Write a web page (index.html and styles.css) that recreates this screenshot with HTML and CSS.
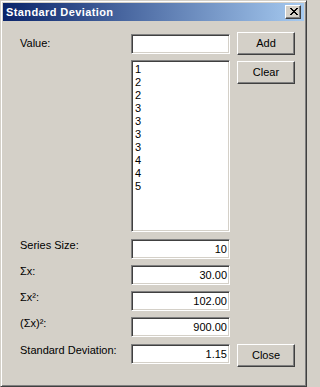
FILE: index.html
```html
<!DOCTYPE html>
<html>
<head>
<meta charset="utf-8">
<link rel="stylesheet" href="styles.css">
</head>
<body>
<div class="window">
  <div class="titlebar">
    <span class="title">Standard Deviation</span>
    <span class="caption-btn">
      <svg width="8" height="7" viewBox="0 0 8 7" shape-rendering="crispEdges"><path fill="#000" d="M0 0h2v1H0z M6 0h2v1H6z M1 1h2v1H1z M5 1h2v1H5z M2 2h4v1H2z M3 3h2v1H3z M2 4h4v1H2z M1 5h2v1H1z M5 5h2v1H5z M0 6h2v1H0z M6 6h2v1H6z"/></svg>
    </span>
  </div>
  <div class="client">
    <div class="row row-value">
      <span class="label label-value">Value:</span>
      <div class="field field-input"></div>
      <button class="btn">Add</button>
    </div>
    <div class="row row-list">
      <span class="label"></span>
      <div class="listbox">
        <div>1</div><div>2</div><div>2</div><div>3</div><div>3</div><div>3</div><div>3</div><div>4</div><div>4</div><div>5</div>
      </div>
      <button class="btn">Clear</button>
    </div>
    <div class="row row-stat first">
      <span class="label">Series Size:</span>
      <div class="field num">10</div>
    </div>
    <div class="row row-stat">
      <span class="label">Σx:</span>
      <div class="field num">30.00</div>
    </div>
    <div class="row row-stat">
      <span class="label">Σx²:</span>
      <div class="field num">102.00</div>
    </div>
    <div class="row row-stat">
      <span class="label">(Σx)²:</span>
      <div class="field num">900.00</div>
    </div>
    <div class="row row-stat last">
      <span class="label">Standard Deviation:</span>
      <div class="field num">1.15</div>
      <button class="btn">Close</button>
    </div>
  </div>
</div>
</body>
</html>
```
FILE: styles.css
```css
* { box-sizing: border-box; }
html, body {
  margin: 0;
  padding: 0;
  background: #d4d0c8;
}
body {
  font-family: "Liberation Sans", Arial, sans-serif;
  font-size: 11px;
  line-height: 13px;
  color: #000;
}
.window {
  width: 307px;
  height: 387px;
  background: #d4d0c8;
  border: 1px solid;
  border-color: #d4d0c8 #404040 #404040 #d4d0c8;
  box-shadow: inset 1px 1px 0 #fff, inset -1px -1px 0 #808080;
  padding: 2px;
  display: flex;
  flex-direction: column;
}
.titlebar {
  height: 18px;
  flex: none;
  background: linear-gradient(to right, #0a246a, #a6caf0);
  display: flex;
  align-items: flex-start;
  justify-content: space-between;
  padding-left: 3px;
  padding-right: 3px;
}
.title {
  color: #fff;
  font-weight: bold;
  font-size: 11px;
  letter-spacing: 0.4px;
  line-height: 13px;
  margin-top: 3px;
}
.caption-btn {
  width: 16px;
  height: 14px;
  margin-top: 2px;
  background: #d4d0c8;
  border: 1px solid;
  border-color: #fff #404040 #404040 #fff;
  box-shadow: inset -1px -1px 0 #808080;
  display: flex;
  padding: 2px 0 0 4px;
}
.caption-btn svg { display: block; }
.client {
  flex: 1;
  padding: 11px 0 0 17px;
  display: flex;
  flex-direction: column;
}
.row {
  display: grid;
  grid-template-columns: 104px 99px 58px;
  column-gap: 7px;
  align-items: start;
}
.label {
  white-space: nowrap;
}
.label-value { margin-top: 5px; }
.field {
  height: 20px;
  background: #fff;
  border: 1px solid;
  border-color: #808080 #fff #fff #808080;
  box-shadow: inset 1px 1px 0 #404040, inset -1px -1px 0 #d4d0c8;
  padding: 3px 2px 0 2px;
}
.field-input { margin-top: 2px; }
.num { text-align: right; }
.btn {
  width: 58px;
  height: 23px;
  margin: 0;
  padding: 0;
  font-family: inherit;
  font-size: 11px;
  line-height: 13px;
  color: #000;
  background: #d4d0c8;
  border: 1px solid;
  border-color: #fff #404040 #404040 #fff;
  box-shadow: inset -1px -1px 0 #808080;
  display: flex;
  align-items: center;
  justify-content: center;
}
.row-list { margin-top: 5px; }
.row-list .btn { margin-top: 1px; }
.listbox {
  height: 172px;
  background: #fff;
  border: 1px solid;
  border-color: #808080 #fff #fff #808080;
  box-shadow: inset 1px 1px 0 #404040, inset -1px -1px 0 #d4d0c8;
  padding: 2px 2px 0 3px;
}
.row-stat { margin-top: 6px; }
.row-stat.first { margin-top: 7px; }
.row-stat.last { margin-top: 7px; }
```
